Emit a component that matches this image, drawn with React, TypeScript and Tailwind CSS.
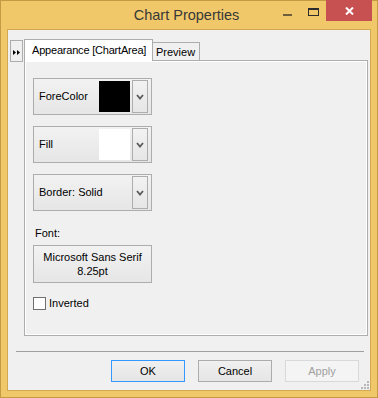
import React from 'react';

const Chevron: React.FC = () => (
  <svg width="8" height="6" viewBox="0 0 8 6" className="block">
    <polyline points="1,1 4,4.5 7,1" fill="none" stroke="#5a5a5a" strokeWidth="1.8" />
  </svg>
);

const DropButton: React.FC<{ label: string; swatch?: string }> = ({ label, swatch }) => (
  <div className="w-[119px] h-[37px] border border-[#adadad] bg-gradient-to-b from-[#f2f2f2] to-[#e6e6e6] flex items-center pl-[5px] pr-[3px]">
    <span className="flex-1 text-black">{label}</span>
    {swatch && (
      <div className={`w-[31px] h-[31px] mr-[2px] ${swatch === 'black' ? 'bg-black' : 'bg-white'}`} />
    )}
    <div className="w-[16px] h-[33px] border border-[#adadad] bg-gradient-to-b from-[#f2f2f2] to-[#e6e6e6] flex items-center justify-center">
      <Chevron />
    </div>
  </div>
);

const DialogButton: React.FC<{ label: string; variant?: 'default' | 'disabled' }> = ({ label, variant }) => (
  <div
    className={`w-[74px] h-[22px] border flex items-center justify-center ${
      variant === 'default'
        ? 'border-[#3399ff] bg-gradient-to-b from-[#f0f0f0] to-[#e5e5e5] text-black'
        : variant === 'disabled'
        ? 'border-[#d9d9d9] bg-[#f4f4f4] text-[#a0a0a0]'
        : 'border-[#acacac] bg-gradient-to-b from-[#f0f0f0] to-[#e5e5e5] text-black'
    }`}
  >
    {label}
  </div>
);

export default function App() {
  return (
    <div className="w-[378px] h-[398px] bg-[#f0c86a] border border-[#c49a45] flex flex-col font-['Liberation_Sans',Arial,sans-serif] text-[11px] leading-[13px]">
      {/* Title bar */}
      <div className="h-[28px] flex items-start">
        <div className="flex-1" />
        <div className="pt-[6px] text-[14.5px] leading-[17px] text-[#383838] whitespace-nowrap">Chart Properties</div>
        <div className="flex-1 flex justify-end pr-[5px]">
          <div className="w-[26px] h-[20px] flex items-center justify-center">
            <div className="w-[9px] h-[2px] bg-[#6e5f3c] mt-[7px]" />
          </div>
          <div className="w-[26px] h-[20px] flex items-center justify-center">
            <div className="w-[11px] h-[8px] border border-t-2 border-[#2b2b2b] mt-[1px]" />
          </div>
          <div className="w-[46px] h-[21px] -mt-[1px] bg-[#c75050] flex items-center justify-center">
            <svg width="9" height="8" viewBox="0 0 9 8">
              <path d="M1 0.5 L8 7.5 M8 0.5 L1 7.5" stroke="#fff" strokeWidth="2" />
            </svg>
          </div>
        </div>
      </div>

      {/* Client area */}
      <div className="flex-1 mx-[6px] mb-[6px] border border-[#d2a852] bg-[#f0f0f0] flex flex-col relative">
        <div className="flex mt-[9px]">
          {/* expander */}
          <div className="ml-[2px] mt-[1px] w-[13px] h-[22px] border border-[#adadad] bg-[#f0f0f0] flex items-center justify-center">
            <svg width="7" height="5" viewBox="0 0 7 5" className="mt-[2px]">
              <path d="M0 0 L3 2.5 L0 5 Z M4 0 L7 2.5 L4 5 Z" fill="#000" />
            </svg>
          </div>

          {/* tab control */}
          <div className="ml-[1px] mr-[2px] flex-1 h-[297px] flex flex-col">
            <div className="h-[21px] flex items-end relative z-10">
              <div className="w-[129px] h-[22px] -mb-[1px] border border-b-0 border-[#adadad] bg-white flex items-start pl-[7px] pt-[4px] tracking-[-0.2px] whitespace-nowrap">
                Appearance [ChartArea]
              </div>
              <div className="w-[47px] h-[18px] border border-b-0 border-l-0 border-[#adadad] bg-[#f0f0f0] flex items-start pl-[3px] pt-[3px]">
                Preview
              </div>
            </div>
            <div className="flex-1 border border-[#adadad] bg-white p-[1px]">
              <div className="h-full bg-[#f0f0f0] pl-[7px] pt-[16px] flex flex-col">
                <div className="flex flex-col gap-[11px]">
                  <DropButton label="ForeColor" swatch="black" />
                  <DropButton label="Fill" swatch="white" />
                  <DropButton label="Border: Solid" />
                </div>
                <div className="mt-[16px] pl-[2px] h-[13px]">Font:</div>
                <div className="mt-[5px] w-[119px] h-[38px] border border-[#adadad] bg-gradient-to-b from-[#f2f2f2] to-[#e6e6e6] flex flex-col items-center justify-center leading-[14px] text-black">
                  <span>Microsoft Sans Serif</span>
                  <span>8.25pt</span>
                </div>
                <div className="mt-[14px] flex items-center">
                  <div className="w-[13px] h-[13px] border border-[#707070] bg-white" />
                  <span className="ml-[3px]">Inverted</span>
                </div>
              </div>
            </div>
          </div>
        </div>

        {/* separator */}
        <div className="mt-[15px] ml-[8px] mr-[6px] h-px bg-[#a0a0a0]" />

        {/* buttons */}
        <div className="mt-[8px] flex justify-end gap-[13px] pr-[11px]">
          <DialogButton label="OK" variant="default" />
          <DialogButton label="Cancel" />
          <DialogButton label="Apply" variant="disabled" />
        </div>

        {/* size grip */}
        <svg width="8" height="8" viewBox="0 0 8 8" className="absolute right-[1px] bottom-[1px]">
          <rect x="6" y="0" width="2" height="2" fill="#b8b8b8" />
          <rect x="3" y="3" width="2" height="2" fill="#b8b8b8" />
          <rect x="6" y="3" width="2" height="2" fill="#b8b8b8" />
          <rect x="0" y="6" width="2" height="2" fill="#b8b8b8" />
          <rect x="3" y="6" width="2" height="2" fill="#b8b8b8" />
          <rect x="6" y="6" width="2" height="2" fill="#b8b8b8" />
        </svg>
      </div>
    </div>
  );
}
